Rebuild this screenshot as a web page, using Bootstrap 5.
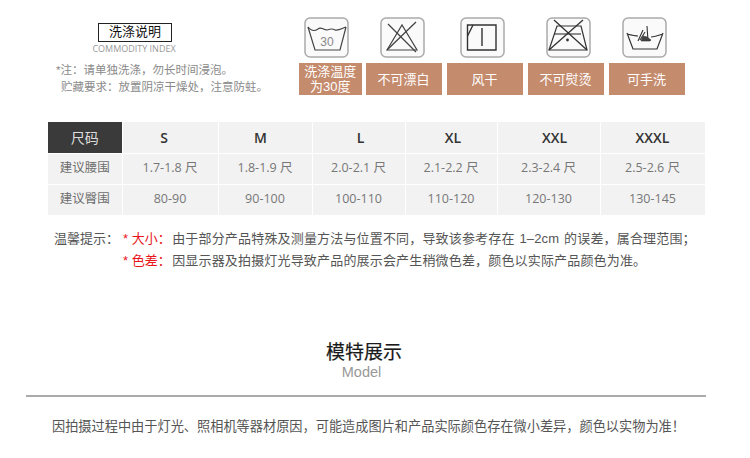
<!DOCTYPE html>
<html lang="zh"><head><meta charset="utf-8">
<link href="https://cdn.jsdelivr.net/npm/bootstrap@5.3.0/dist/css/bootstrap.min.css" rel="stylesheet">
<style>
html,body{height:458px;overflow:hidden}
body{width:750px;background:#fff;font-family:"Liberation Sans","Noto Sans CJK SC",sans-serif;color:#555}
.top-wrap{padding:17px 0 0 56px;height:122px}
.left-col{width:243px;flex:none}
.title-box{width:74px;height:19px;margin:6px 0 0 42px;border:1.5px solid #222;color:#111;font-size:13px;line-height:16px;text-align:center}
.title-sub{margin-left:36px;width:84px;font-family:"Open Sans",sans-serif;font-size:9px;line-height:10px;color:#999;text-align:center;margin-top:2px;white-space:nowrap}
.note{font-size:11.5px;line-height:17px;color:#8a8a8a;white-space:nowrap}
.note-a{margin-top:8px}
.note-b{padding-left:5px}
.care-row{gap:5px}
.care{width:76px;flex:none;display:flex;flex-direction:column;align-items:flex-start}
.care-first{width:62.5px;margin-right:-1px}
.care-icon{width:46px;height:42px;display:block;margin-bottom:4px}
.ic-a{margin-left:5px}.ic-b{margin-left:14px}.ic-c{margin-left:13px}.ic-d{margin-left:18px}.ic-e{margin-left:13px}
.care-label{width:100%;height:32px;background:#c58b6d;color:#fff;font-size:13px;line-height:15px;display:flex;align-items:center;justify-content:center;text-align:center}
.size-table{width:657px;margin:0 0 0 48px;table-layout:fixed;border-collapse:collapse}
.c-a{width:74px}.c-b{width:96px}.c-c{width:94px}.c-d{width:93px}.c-e{width:92px}.c-f{width:103px}.c-g{width:105px}
.size-table td,.size-table th{background:#f2f2f2;border:1px solid #fff;border-width:0 1px 1px 0;padding:0;text-align:center;vertical-align:middle;font-family:"Open Sans","Noto Sans CJK SC",sans-serif;font-size:12.5px;color:#777;font-weight:400;height:31px}
.size-table .head-row th{font-size:14px;color:#333;font-weight:600}
.size-table .head-row th.head-dark{background:#3a3a3a;color:#ddd;font-weight:400;font-size:14px}
.size-table .head-row .h-s{padding-right:12px}.size-table .head-row .h-m{padding-right:9px}.size-table .head-row .h-l{padding-left:4px}.size-table .head-row .h-xl{padding-left:4px}.size-table .head-row .h-xxl{padding-left:12px}
.size-table .row-name{color:#6e6e6e;font-size:12.5px}
.tips{margin:12px 0 0 54px;font-size:13px;line-height:22px;color:#555;white-space:nowrap}
.tips-red{color:#e8161b;margin-left:4px;margin-right:1.500px}
.tip-body{letter-spacing:.17px}
.tip-num{padding:0 1px}
.tip-indent{padding-left:65px}
.model-head{margin-top:70px;text-align:center;padding-right:22px}
.model-cn{font-size:19px;line-height:22px;color:#1a1a1a;-webkit-text-stroke:.2px #1a1a1a}
.model-en{font-size:14.5px;line-height:16px;color:#999;font-weight:300;padding-right:5px}
.model-line{height:2px;background:#aaa;margin:15px 44px 0 26px}
.foot-text{margin:21px 0 0 52px;font-size:13.2px;line-height:18px;color:#555;white-space:nowrap}
</style></head><body>
<div class="top-wrap d-flex">
 <div class="left-col">
  <div class="title-box">洗涤说明</div>
  <div class="title-sub">COMMODITY INDEX</div>
  <div class="note note-a">*注：请单独洗涤，勿长时间浸泡。</div>
  <div class="note note-b">贮藏要求：放置阴凉干燥处，注意防蛀。</div>
 </div>
 <div class="d-flex care-row">
  <div class="care care-first">
   <svg class="care-icon ic-a" viewBox="0 0 46 42" fill="none" stroke="#444"><rect x="1" y="1" width="43" height="39" rx="5" stroke="#aaa" stroke-width="1.5" fill="#fafafa"/><path d="M4 10l7 23h25l6-23" stroke-width="1.2"/><path d="M4 10c4 5 7 4 10 2 3-3 5 1 9 1 3-1 5-2 8 0 3 1 6-1 11-3" stroke-width="1.2"/><text x="23" y="29" font-size="12" text-anchor="middle" fill="#888" stroke="none" font-family="Liberation Sans">30</text></svg>
   <div class="care-label">洗涤温度<br>为30度</div>
  </div>
  <div class="care">
   <svg class="care-icon ic-b" viewBox="0 0 46 42" fill="none" stroke="#444"><rect x="1" y="1" width="43" height="39" rx="5" stroke="#aaa" stroke-width="1.5" fill="#fafafa"/><path d="M7 33L22 8l15 25z" stroke-width="1.2"/><path d="M8 7l28 28M36 5L7 33" stroke-width="1.3"/></svg>
   <div class="care-label">不可漂白</div>
  </div>
  <div class="care">
   <svg class="care-icon ic-c" viewBox="0 0 46 42" fill="none" stroke="#333"><rect x="1" y="1" width="43" height="39" rx="5" stroke="#aaa" stroke-width="1.5" fill="#fafafa"/><path d="M7.500 8H36v25H7.500z" stroke-width="1.4"/><path d="M7.500 19L13 8M22 11v18" stroke-width="1.4"/></svg>
   <div class="care-label">风干</div>
  </div>
  <div class="care">
   <svg class="care-icon ic-d" viewBox="0 0 46 42" fill="none" stroke="#333"><rect x="1" y="1" width="43" height="39" rx="5" stroke="#aaa" stroke-width="1.5" fill="#fafafa"/><path d="M3 33L11 9h24l6 24z" stroke-width="1.2"/><path d="M8 17h27" stroke-width="1.1"/><path d="M8 3l33 30M37 3L3 33" stroke-width="1.3"/><circle cx="21.500" cy="23" r="1.400" fill="#333" stroke="none"/></svg>
   <div class="care-label">不可熨烫</div>
  </div>
  <div class="care">
   <svg class="care-icon ic-e" viewBox="0 0 46 42" fill="none" stroke="#333"><rect x="1" y="1" width="43" height="39" rx="5" stroke="#aaa" stroke-width="1.5" fill="#fafafa"/><path d="M5 16l6 16h24l6-16M5 17c4 1 8 2 11 2M29 20c4 0 8-2 12-3" stroke-width="1.2"/><path d="M16 24l5-11M18 23l5-8M25 9l1 15" stroke-width="1.1"/><path d="M19 24l2-5 4 1 4 3-1 1z" fill="#444" stroke-width=".6"/></svg>
   <div class="care-label">可手洗</div>
  </div>
 </div>
</div>
<table class="size-table">
 <colgroup><col class="c-a"><col class="c-b"><col class="c-c"><col class="c-d"><col class="c-e"><col class="c-f"><col class="c-g"></colgroup>
 <tr class="head-row"><th class="head-dark">尺码</th><th class="h-s">S</th><th class="h-m">M</th><th class="h-l">L</th><th class="h-xl">XL</th><th class="h-xxl">XXL</th><th>XXXL</th></tr>
 <tr><td class="row-name">建议腰围</td><td>1.7-1.8 尺</td><td>1.8-1.9 尺</td><td>2.0-2.1 尺</td><td>2.1-2.2 尺</td><td>2.3-2.4 尺</td><td>2.5-2.6 尺</td></tr>
 <tr><td class="row-name">建议臀围</td><td>80-90</td><td>90-100</td><td>100-110</td><td>110-120</td><td>120-130</td><td>130-145</td></tr>
</table>
<div class="tips">
 <div>温馨提示：<span class="tips-red">* 大小：</span><span class="tip-body">由于部分产品特殊及测量方法与位置不同，导致该参考存在<span class="tip-num"> 1–2cm </span>的误差，属合理范围；</span></div>
 <div class="tip-indent"><span class="tips-red">* 色差：</span><span class="tip-body">因显示器及拍摄灯光导致产品的展示会产生稍微色差，颜色以实际产品颜色为准。</span></div>
</div>
<div class="model-head">
 <div class="model-cn">模特展示</div>
 <div class="model-en">Model</div>
</div>
<div class="model-line"></div>
<div class="foot-text">因拍摄过程中由于灯光、照相机等器材原因，可能造成图片和产品实际颜色存在微小差异，颜色以实物为准！</div>
</body></html>
